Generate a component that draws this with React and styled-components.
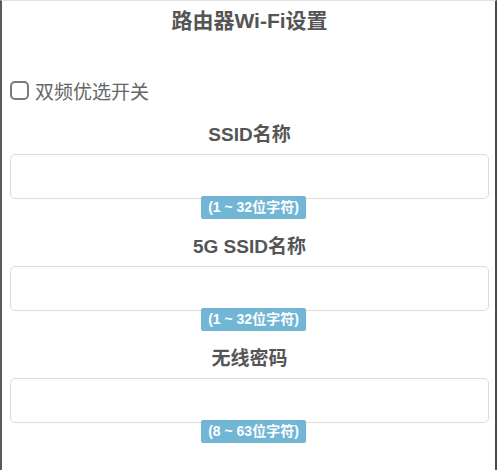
import React from "react";
import styled, { createGlobalStyle } from "styled-components";

const Global = createGlobalStyle`
  html, body { margin: 0; padding: 0; background: #fff; }
  body { font-family: "Liberation Sans", "Noto Sans CJK SC", sans-serif; }
`;

const Frame = styled.div`
  width: 497px;
  height: 470px;
  box-sizing: border-box;
  border-left: 2px solid #5a5a5a;
  border-right: 2px solid #4a4a4a;
  border-top: 1px solid #e2e2e2;
  padding: 0 6px 0 8px;
  display: flex;
  flex-direction: column;
  overflow: hidden;
`;

const Title = styled.h1`
  margin: 0;
  height: 39px;
  line-height: 39px;
  text-align: center;
  font-size: 21px;
  font-weight: 700;
  color: #555;
`;

const CheckRow = styled.label`
  margin-top: 36px;
  height: 28px;
  display: flex;
  align-items: center;
  gap: 6px;
  font-size: 19px;
  color: #666;
  font-family: "Noto Sans CJK SC", sans-serif;
`;

const Box = styled.span`
  width: 15px;
  height: 15px;
  border: 2px solid #7a7a7a;
  border-radius: 5px;
  flex: none;
`;

const Section = styled.div`
  margin-top: ${(p) => p.$top}px;
  display: flex;
  flex-direction: column;
  align-items: center;
`;

const Label = styled.div`
  height: 24px;
  line-height: 24px;
  font-size: 19px;
  font-weight: 700;
  color: #555;
`;

const Input = styled.div`
  margin-top: 7px;
  align-self: stretch;
  height: 45px;
  box-sizing: border-box;
  border: 1.5px solid #dcdcdc;
  border-radius: 5px;
  background: #fff;
`;

const Badge = styled.div`
  margin-top: -3px;
  margin-left: 8px;
  height: 23px;
  line-height: 23px;
  padding: 0 7px;
  background: #72b6d5;
  color: #fff;
  border-radius: 2px;
  font-size: 14px;
  font-weight: 700;
  position: relative;
`;

const fields = [
  { label: "SSID名称", hint: "(1 ~ 32位字符)" },
  { label: "5G SSID名称", hint: "(1 ~ 32位字符)" },
  { label: "无线密码", hint: "(8 ~ 63位字符)" },
];

export default function App() {
  return (
    <>
      <Global />
      <Frame>
        <Title>路由器Wi-Fi设置</Title>
        <CheckRow>
          <Box />
          双频优选开关
        </CheckRow>
        {fields.map((f, i) => (
          <Section key={f.label} $top={i === 0 ? 19 : 16}>
            <Label>{f.label}</Label>
            <Input />
            <Badge>{f.hint}</Badge>
          </Section>
        ))}
      </Frame>
    </>
  );
}
